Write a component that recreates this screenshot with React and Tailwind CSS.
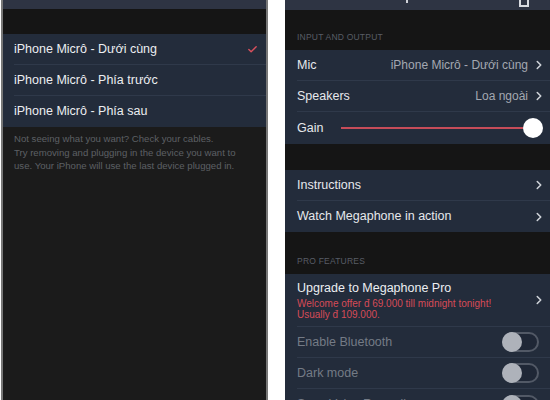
import { Check, ChevronRight } from "lucide-react";

const font = { fontFamily: '"Liberation Sans", Arial, sans-serif' };

const mics = ["iPhone Micrô - Dưới cùng", "iPhone Micrô - Phía trước", "iPhone Micrô - Phía sau"];

function Row({ label, value, last, dim, children, chevron = true }) {
  return (
    <div className="shrink-0 pl-3 bg-[#232c3b]">
      <div className={`h-[31px] flex items-center pr-2 ${last ? "" : "border-b border-[#2f394a]"}`}>
        <span className={`text-[12.5px] ${dim ? "text-[#747b86]" : "text-[#e6e8ec]"}`}>{label}</span>
        <div className="flex-1" />
        {value && <span className="text-[12px] text-[#a3a8b1] mr-1">{value}</span>}
        {children}
        {chevron && !children && <ChevronRight size={14} strokeWidth={2.6} className="text-[#cfd3d9] -mr-1" />}
      </div>
    </div>
  );
}

function Toggle() {
  return (
    <div className="w-[37px] h-[20px] rounded-full border-2 border-[#525966] bg-[#1f2736] flex items-center mr-[3px]">
      <div className="w-[20px] h-[20px] rounded-full bg-[#aeb2ba] -ml-[2px]" />
    </div>
  );
}

function Label({ children, className = "" }) {
  return (
    <div className={`shrink-0 bg-[#151515] px-3 flex items-end pb-[6px] text-[8.5px] tracking-wide text-[#585d66] ${className}`}>
      {children}
    </div>
  );
}

export default function App() {
  return (
    <div className="w-[550px] h-[400px] bg-white flex overflow-hidden" style={font}>
      {/* microphone picker */}
      <div className="w-[267px] ml-[1px] flex flex-col bg-[#1b1b1b] border-x-2 border-[#777]">
        <div className="shrink-0 h-[9px] bg-[#2e3443]" />
        <div className="shrink-0 h-[25px] bg-[#151515]" />
        <div className="shrink-0 bg-[#232c3b]">
          {mics.map((m, i) => (
            <div key={m} className="pl-[11px]">
              <div className={`h-[31px] flex items-center pr-[8px] ${i < 2 ? "border-b border-[#2f394a]" : ""}`}>
                <span className="text-[12.5px] text-[#eceef1]">{m}</span>
                <div className="flex-1" />
                {i === 0 && <Check size={11} strokeWidth={3} className="text-[#d8505d]" />}
              </div>
            </div>
          ))}
        </div>
        <p className="px-[11px] pt-[5px] text-[9.6px] leading-[13.5px] text-[#5d6065]">
          Not seeing what you want? Check your cables.
          <br />
          Try removing and plugging in the device you want to
          <br />
          use. Your iPhone will use the last device plugged in.
        </p>
      </div>

      <div className="w-[17px] shrink-0" />

      {/* settings */}
      <div className="flex-1 flex flex-col bg-[#151515]">
        <div className="shrink-0 h-[10px] bg-[#2e3443] relative overflow-hidden">
          <div className="absolute left-[121px] top-0 w-[2px] h-[3px] bg-[#cfd2d8]" />
          <div className="absolute left-[234px] top-0 w-[10px] h-[7px] border-2 border-t-0 border-[#d8dbe0]" />
        </div>
        <Label className="h-[40px]">INPUT AND OUTPUT</Label>
        <Row label="Mic" value="iPhone Micrô - Dưới cùng" />
        <Row label="Speakers" value="Loa ngoài" />
        <div className="shrink-0 pl-3 bg-[#232c3b] h-[32px] flex items-center pr-[7px]">
          <span className="text-[12.5px] text-[#e6e8ec] w-[44px]">Gain</span>
          <div className="flex-1 h-[2px] bg-[#c64c59]" />
          <div className="w-[20px] h-[20px] rounded-full bg-white" />
        </div>
        <div className="shrink-0 h-[26px]" />
        <Row label="Instructions" />
        <Row label="Watch Megaphone in action" last />
        <Label className="h-[42px]">PRO FEATURES</Label>
        <div className="shrink-0 pl-3 bg-[#232c3b]">
          <div className="h-[53px] flex items-center pr-2 border-b border-[#2f394a]">
            <div className="flex flex-col">
              <span className="text-[12.5px] text-[#eceef1] leading-[16px]">Upgrade to Megaphone Pro</span>
              <span className="text-[10px] leading-[11.5px] text-[#d64b57] mt-[2px]">
                Welcome offer đ 69.000 till midnight tonight!
                <br />
                Usually đ 109.000.
              </span>
            </div>
            <div className="flex-1" />
            <ChevronRight size={14} strokeWidth={2.6} className="text-[#cfd3d9] -mr-1" />
          </div>
        </div>
        <Row label="Enable Bluetooth" dim>
          <Toggle />
        </Row>
        <Row label="Dark mode" dim>
          <Toggle />
        </Row>
        <Row label="Save Voice Recordings" dim last>
          <Toggle />
        </Row>
      </div>
    </div>
  );
}
